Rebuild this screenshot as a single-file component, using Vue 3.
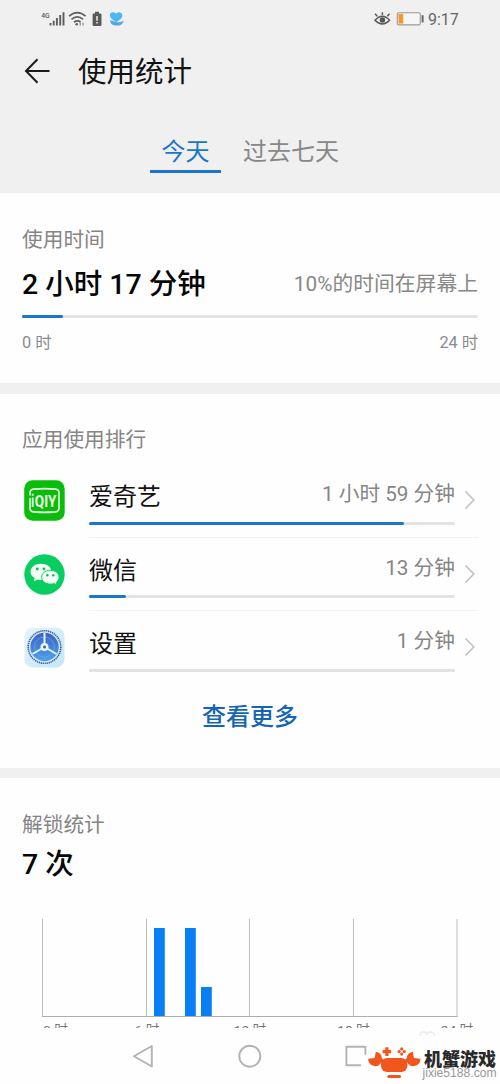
<script setup>
const apps = [
  { id: 'video', name: '爱奇艺', time: '1 小时 59 分钟', percent: 86.2 },
  { id: 'chat', name: '微信', time: '13 分钟', percent: 10 },
  { id: 'settings', name: '设置', time: '1 分钟', percent: 0 },
]
const gridLines = [42.5, 146.5, 249.5, 353.5, 457]
const bars = [
  { x: 154, y: 9 },
  { x: 185, y: 9 },
  { x: 201, y: 68 },
]
const hours = [
  { text: '0 时', x: 55.5 },
  { text: '6 时', x: 147 },
  { text: '12 时', x: 250 },
  { text: '18 时', x: 353.5 },
  { text: '24 时', x: 457 },
]
</script>

<template>
  <div class="screen">
    <header class="header">
      <div class="status">
        <svg class="status-left" width="90" height="20" viewBox="38 9 90 20">
          <text class="net" x="41.2" y="18" textLength="8.500" lengthAdjust="spacingAndGlyphs">4G</text>
          <g stroke="#5e5e5e" stroke-width="1.9">
            <path d="M50.5 25.5v-2.6M53.7 25.5v-4.8M56.9 25.5v-7.4M60.2 25.5v-10.4M63.5 25.5v-13.2" />
          </g>
          <g fill="none" stroke="#5e5e5e" stroke-width="1.7">
            <path d="M69 16.2q8.300-7.200 16.600 0" />
            <path d="M71.500 19.300q5.800-4.700 11.600 0" />
            <path d="M74 22.200q3.300-2.500 6.600 0" />
          </g>
          <circle cx="76.700" cy="24.300" r="1.300" fill="#5e5e5e" />
          <path d="M80.300 22.800v2.600M83 22.800v2.600" stroke="#959595" stroke-width="1.300" />
          <path d="M95 11.800h4v1.600h1.300q1.200 0 1.200 1.200v10.200q0 1.200-1.200 1.200h-6.500q-1.200 0-1.200-1.200v-10.200q0-1.200 1.200-1.200h1.200z" fill="#5a5a5a" />
          <path d="M97 16v4.800M97 22v1.500" stroke="#eee" stroke-width="1.500" />
          <path d="M116.300 22.200c-4.500-2.700-6.800-5-6.300-7.700c.6-2.900 4.300-3.100 6.200-.8c2-2.300 5.500-2 6.100 1c.5 2.600-1.600 4.800-6 7.500z" fill="#4bb7f5" />
          <path d="M110 20.300c2.300.2 3.600 1.400 6 1.800c2.500.3 4.500-.2 8-1.200c-1.200 3-3.800 4.700-7 4.700c-3 0-4.600-.8-6-2.200z" fill="#52a9e4" />
        </svg>
        <svg class="status-right" width="52" height="20" viewBox="374 9 52 20">
          <g fill="none" stroke="#595959" stroke-width="1.500">
            <path d="M376 20.200q7.300-8 14.600 0q-7.300 7.500-14.600 0z" />
            <path d="M378.300 16.400l-2.200-2.700M383.400 15v-2.800M388.400 16.200l2-2.500" />
          </g>
          <circle cx="383.400" cy="20" r="2.700" fill="#555" />
          <rect x="398.300" y="12.700" width="23" height="12.200" rx="1.500" fill="#f6f6f6" stroke="#999" stroke-width="1.100" />
          <rect x="399.500" y="14" width="4.700" height="9.600" fill="#f29a27" />
          <path d="M423.600 15.200v7.200" stroke="#666" stroke-width="2" />
        </svg>
        <span class="clock">9:17</span>
      </div>
      <div class="titlebar">
        <svg width="28" height="28" viewBox="0 0 28 28" fill="none" stroke="#1c1c1c" stroke-width="2">
          <path d="M26.500 14H3M14.500 2.200L3 14l11.500 11.800" />
        </svg>
        <h1>使用统计</h1>
      </div>
      <nav class="tabs">
        <span class="tab active">今天</span>
        <span class="tab">过去七天</span>
      </nav>
    </header>

    <section class="usage">
      <h2>使用时间</h2>
      <div class="total">
        <strong>2 小时 17 分钟</strong>
        <span>10%的时间在屏幕上</span>
      </div>
      <div class="track"><div class="fill day"></div></div>
      <div class="range"><span>0 时</span><span>24 时</span></div>
    </section>

    <section class="ranking">
      <h2>应用使用排行</h2>
      <div v-for="app in apps" :key="app.id" class="row">
        <svg v-if="app.id === 'video'" class="icon" viewBox="0 0 41 41">
          <rect x=".2" y=".2" width="40.500" height="40.500" rx="8.500" fill="#0bbd0b" />
          <path d="M6 15.500V13q0-3.600 3.500-3.900q11-1 22 0q3.500.3 3.500 3.900v15q0 3.600-3.500 3.900q-11 1-22 0Q6 31.600 6 28V18" fill="none" stroke="#e9ffe4" stroke-width="1.600" />
          <path d="M8.700 13.800v2M8.700 17.500v9.500" stroke="#e9ffe4" stroke-width="1.800" />
          <text class="qiy" x="10.800" y="26.500" textLength="21.500" lengthAdjust="spacingAndGlyphs">QIY</text>
        </svg>
        <svg v-else-if="app.id === 'chat'" class="icon" viewBox="0 0 41 41">
          <circle cx="20.500" cy="20.500" r="20.200" fill="#08ce61" />
          <path d="M17 9.700c6 0 10.600 3.500 10.600 8.200s-4.600 8.200-10.600 8.200c-1.200 0-2.400-.1-3.500-.5l-3.700 2 .9-3.600c-2.600-1.500-4.200-3.600-4.200-6.100C6.500 13.200 11.200 9.700 17 9.700z" fill="#f2fff5" />
          <path d="M26.300 16.300c5 0 8.800 3 8.800 6.900 0 2-1 3.800-2.700 5.100l.6 2.700-3-1.500c-1.100.4-2.400.6-3.700.6-4.900 0-8.700-3-8.700-6.900s3.800-6.900 8.700-6.900z" fill="#f2fff5" stroke="#08ce61" stroke-width="1" />
          <g fill="#14b65c"><circle cx="13.300" cy="15" r="1.400" /><circle cx="20" cy="15" r="1.400" /><circle cx="23.400" cy="21.200" r="1.200" /><circle cx="29.300" cy="21.200" r="1.200" /></g>
        </svg>
        <svg v-else class="icon" viewBox="0 0 41 41">
          <defs>
            <linearGradient id="dial" x1="0" y1="0" x2="0" y2="1"><stop offset="0" stop-color="#3b62c4" /><stop offset="1" stop-color="#4aa3ee" /></linearGradient>
            <linearGradient id="plate" x1="0" y1="0" x2="1" y2="1"><stop offset="0" stop-color="#e4f4fc" /><stop offset="1" stop-color="#c3e6fa" /></linearGradient>
          </defs>
          <rect x=".5" y=".5" width="40" height="40" rx="8.500" fill="url(#plate)" />
          <circle cx="20.500" cy="20" r="16.300" fill="#d9ecfa" stroke="#3c5c91" stroke-width="1.600" stroke-dasharray="1.300 .7" />
          <circle cx="20.500" cy="20" r="14.200" fill="url(#dial)" />
          <circle cx="20.500" cy="20" r="10" fill="none" stroke="#719fe3" stroke-width=".8" />
          <path d="M20.500 20V6M20.500 20l-12 7M20.500 20l12 7" stroke="#e5f2ff" stroke-width="2" />
          <circle cx="20.500" cy="20" r="4" fill="#e8f4ff" /><circle cx="20.500" cy="20" r="1.500" fill="#4b5e7b" />
        </svg>
        <div class="info">
          <div class="main">
            <div class="labels"><span class="name">{{ app.name }}</span><span class="time">{{ app.time }}</span></div>
            <div class="track"><div class="fill" :style="{ width: app.percent + '%' }"></div></div>
          </div>
          <svg class="chevron" width="12" height="20" viewBox="0 0 12 20" fill="none" stroke="#c2c2c2" stroke-width="1.700"><path d="M1.500 1.500l8.300 8.500-8.300 8.500" /></svg>
        </div>
      </div>
      <div class="more">查看更多</div>
    </section>

    <section class="unlock">
      <h2>解锁统计</h2>
      <strong>7 次</strong>
      <svg class="chart" width="500" height="109" viewBox="0 0 500 109">
        <path v-for="x in gridLines" :key="x" :d="`M${x} 0V98`" stroke="#bcbcbc" />
        <rect v-for="bar in bars" :key="bar.x" :x="bar.x" :y="bar.y" width="10.800" :height="97.500 - bar.y" fill="#087ff5" />
        <path d="M42 97.500H457.500" stroke="#adadad" />
        <text v-for="hour in hours" :key="hour.text" class="hour" :x="hour.x" y="115.500" text-anchor="middle">{{ hour.text }}</text>
      </svg>
    </section>

    <footer class="navbar">
      <svg class="keys" width="500" height="56" viewBox="0 0 500 56">
        <g fill="none" stroke="#b3b3b3" stroke-width="1.900" stroke-linejoin="round">
          <path d="M151.800 18v20.500L134 28.200z" />
          <circle cx="249.800" cy="28.200" r="10.500" />
          <path d="M361 37.300h-14.600v-18.600h19v8" />
        </g>
        <path d="M420 8q0-4 3.500-4t3.500 3q0-3 3.500-3t4 4" fill="none" stroke="#ebebeb" stroke-width="1.500" />
        <g fill="#f1571d">
          <rect x="381" y="30" width="26.400" height="14" rx="6" />
          <path d="M375.800 23.700A7 7 0 0 1 381.800 30l2.500 3-3 1.500A7 7 0 0 1 368.200 30.800L374.700 30z" />
          <path d="M412.800 23.700A7 7 0 0 0 406.800 30l-2.500 3 3 1.500A7 7 0 0 0 420.400 30.800L413.900 30z" />
          <rect x="387.300" y="47" width="13.800" height="3" rx="1.500" />
          <path d="M385.300 19.300h3.200v2.700h2.700v3.200h-2.700v2.700h-3.200v-2.700h-2.700v-3.200h2.700z" />
          <circle cx="401.700" cy="20.900" r="1.600" /><circle cx="399.100" cy="23.500" r="1.600" /><circle cx="404.300" cy="23.500" r="1.600" /><circle cx="401.700" cy="26.100" r="1.600" />
        </g>
        <text class="brand" x="424" y="37.500" textLength="72" lengthAdjust="spacingAndGlyphs">机蟹游戏</text>
        <text class="site" x="422.500" y="49.300" textLength="74" lengthAdjust="spacingAndGlyphs">jixie5188.com</text>
      </svg>
    </footer>
  </div>
</template>

<style>
body { margin: 0; background: #fefefe; }
</style>

<style scoped>
.screen {
  width: 500px;
  height: 1084px;
  overflow: hidden;
  display: flex;
  flex-direction: column;
  background: #fefefe;
  font-family: Roboto, "Noto Sans CJK SC", sans-serif;
  color: #111;
}
.screen > * { box-sizing: border-box; flex: none; }
svg { display: block; }
.header { height: 193px; background: #f0f0f0; }
.status { height: 40px; box-sizing: border-box; padding: 9px 40px 0 38px; display: flex; }
.status-right { margin-left: auto; }
.clock { margin-left: 3px; width: 32px; font-size: 16px; line-height: 21px; color: #666; white-space: nowrap; }
.net { font-size: 8px; font-weight: 500; fill: #5e5e5e; }
.titlebar { height: 62px; padding-left: 23px; display: flex; align-items: center; }
h1 { margin: 4px 0 0 27px; font-size: 28.500px; line-height: 40px; font-weight: 400; }
.tabs { margin-top: 27px; display: flex; padding-left: 150px; gap: 22px; }
.tab { height: 44px; box-sizing: border-box; line-height: 46px; font-size: 24px; color: #888; }
.tab.active { width: 71px; text-align: center; color: #1b75c8; border-bottom: 3px solid #1b76cc; }
h2 { margin: 0; font-size: 20.700px; line-height: 31px; height: 30px; font-weight: 400; color: #858585; }
strong { font-weight: 500; font-size: 28.500px; line-height: 40px; color: #070707; }
.usage { height: 190px; padding: 32px 22px 0; }
.total { height: 40px; margin-top: 10px; display: flex; justify-content: space-between; }
.total span { font-size: 20.800px; line-height: 39px; color: #888; }
.track { height: 3px; border-radius: 2px; background: #e3e3e3; }
.fill { height: 3px; border-radius: 2px; background: #1b77c9; }
.fill.day { width: 9%; }
.usage .track { margin-top: 10px; }
.range { margin-top: 13px; display: flex; justify-content: space-between; font-size: 16.300px; line-height: 24px; color: #8b8b8b; }
.ranking { height: 385px; border-top: 11px solid #f0f0f0; padding: 31px 22px 0; }
.row { height: 73.700px; display: flex; padding-left: 2px; }
.ranking h2 + .row { margin-top: 9px; }
.icon { width: 41px; height: 41px; margin-top: 16px; }
.qiy { font-size: 17px; font-weight: 700; fill: #e9ffe4; }
.info { flex: 1; margin-left: 24px; display: flex; border-bottom: 1px solid #f3f3f3; }
.row:nth-last-child(2) .info { border-bottom-color: transparent; }
.main { width: 366px; }
.labels { height: 57.500px; display: flex; justify-content: space-between; }
.name { font-size: 24px; line-height: 66px; }
.time { font-size: 20.700px; line-height: 60px; color: #858585; }
.chevron { margin: 26px 0 0 9px; }
.more { text-align: center; font-size: 24px; line-height: 36px; margin-top: 14px; font-weight: 500; color: #1465b4; }
.unlock { height: 260px; border-top: 10px solid #f0f0f0; padding-top: 32px; overflow: hidden; }
.unlock h2, .unlock strong { display: block; margin-left: 22px; }
.unlock strong { margin-top: 5px; }
.chart { margin-top: 34px; overflow: hidden; }
.hour { font-size: 13.700px; fill: #777; }
.navbar { height: 56px; }
.brand { font: 900 18px "Noto Sans CJK SC", sans-serif; fill: #292929; }
.site { font: 12px "Liberation Sans", sans-serif; fill: #999; }
</style>
